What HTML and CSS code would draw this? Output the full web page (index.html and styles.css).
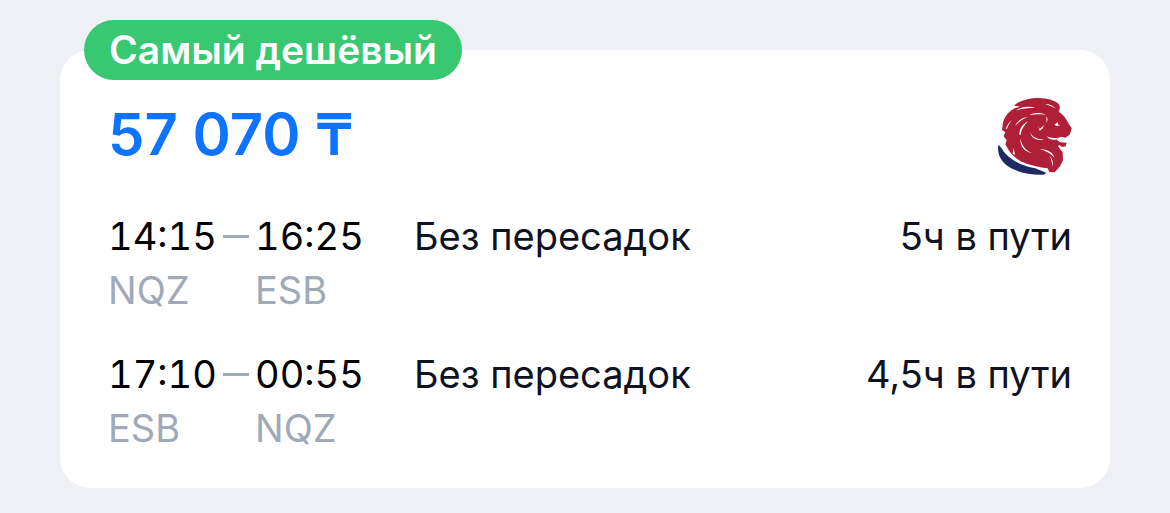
FILE: index.html
```
<!DOCTYPE html>
<html lang="ru">
<head>
    <meta charset="UTF-8">
    <meta name="viewport" content="width=device-width, initial-scale=1.0">
    <title>Авиабилеты</title>
    <link rel="stylesheet" href="styles.css">
</head>
<body>
<article class="ticket">
    <div class="badge">Самый дешёвый</div>
    <div class="ticket-header">
        <div class="price">57 070 ₸</div>
        <svg class="airline-logo" viewBox="54 36 222 234" aria-hidden="true">
            <!-- mane and head -->
            <path fill="#b01f38" d="M102 62C122 45 148 39 178 39C200 40 224 45 236 57L240 68L236 80C248 86 258 100 266 116L275 130L272 142L268 150L256 158L243 155L234 159L230 165L241 172L260 173L257 184L247 186L238 180L234 184L248 202L249 226L240 244L224 262L208 261L203 250C180 247 150 241 125 230C106 221 92 205 84 192L76 178L80 166L71 154L76 141L66 135L69 112C76 92 87 79 104 70L120 65Z"/>
            <!-- light strands between the locks -->
            <g fill="#fff">
                <path d="M107 77C124 65 147 63 166 68C143 68 124 71 107 77Z"/>
                <path d="M77 132C81 119 89 110 98 104C90 112 84 121 81 131Z"/>
                <path d="M105 123C113 107 125 98 143 96C128 101 116 111 105 123Z"/>
                <path d="M148 90C165 82 184 83 197 89C181 87 164 87 148 90Z"/>
                <path d="M118 149C118 130 129 116 143 110C130 123 123 135 122 149Z"/>
                <path d="M121 160C125 182 137 198 156 204C136 202 119 186 121 160Z"/>
                <path d="M151 142C155 155 170 163 192 164C172 169 152 159 151 142Z"/>
                <path d="M174 123L179 132L193 120L187 131L179 137Z"/>
                <path d="M198 95C204 98 204 106 199 113C200 107 200 101 198 95Z"/>
                <path d="M223 119L234 111L233 118L241 121L230 123Z"/>
                <path d="M200 154C211 160 222 159 233 158L229 164C215 166 207 163 200 154Z"/>
                <path d="M181 193C203 192 219 203 223 218C210 204 197 198 181 193Z"/>
                <path d="M208 212C218 221 221 233 217 244C216 232 214 222 208 212Z"/>
                <path d="M101 188L105 210L98 206Z"/>
                <path d="M195 57C209 57 221 63 227 70C217 65 206 61 195 57Z"/>
            </g>
            <!-- blue sweep under the mane -->
            <path fill="#1e2b62" d="M55 180C62 183 66 195 77 206C99 230 131 243 166 250L199 263L191 269C157 271 113 263 84 244C61 228 51 205 55 180Z"/>
        </svg>
    </div>
    <div class="leg">
        <div class="departure">
            <div class="time">14:15</div>
            <div class="airport">NQZ</div>
        </div>
        <div class="dash"></div>
        <div class="arrival">
            <div class="time">16:25</div>
            <div class="airport">ESB</div>
        </div>
        <div class="stops">Без пересадок</div>
        <div class="duration">5ч в пути</div>
    </div>
    <div class="leg">
        <div class="departure">
            <div class="time">17:10</div>
            <div class="airport">ESB</div>
        </div>
        <div class="dash"></div>
        <div class="arrival">
            <div class="time">00:55</div>
            <div class="airport">NQZ</div>
        </div>
        <div class="stops">Без пересадок</div>
        <div class="duration">4,5ч в пути</div>
    </div>
</article>
</body>
</html>
```
FILE: styles.css
```
body {
    font-family: Inter, "Liberation Sans", sans-serif;
    font-size: 38px;
    line-height: 54px;
    margin: 0;
    padding: 50px 60px 24px;
    background-color: #eff0f5;
    color: #0e131f;
}
.ticket {
    position: relative;
    padding: 47px 38px 33px 48px;
    background-color: white;
    border-radius: 30px;
}
.badge {
    position: absolute;
    top: -30px;
    left: 24px;
    padding: 0 25px;
    border-radius: 30px;
    background-color: #37c871;
    color: white;
    font-size: 39px;
    font-weight: 600;
    line-height: 60px;
    white-space: nowrap;
}
.ticket-header {
    display: flex;
    justify-content: space-between;
    align-items: flex-start;
    margin-bottom: 34px;
}
.price {
    color: #0e74ff;
    font-size: 58px;
    font-weight: 600;
    line-height: 74px;
}
.airline-logo {
    width: 74px;
    height: 78px;
}
.leg {
    display: grid;
    grid-template-columns: 109px 26px 108px 1fr auto;
    column-gap: 6px;
}
.leg + .leg {
    margin-top: 30px;
}
.time {
    color: black;
    font-variant-numeric: tabular-nums;
}
.airport {
    color: #a0a9b8;
}
.dash {
    height: 3px;
    margin-top: 26px;
    background-color: #a0a9b8;
}
.stops {
    padding-left: 45px;
}
```
